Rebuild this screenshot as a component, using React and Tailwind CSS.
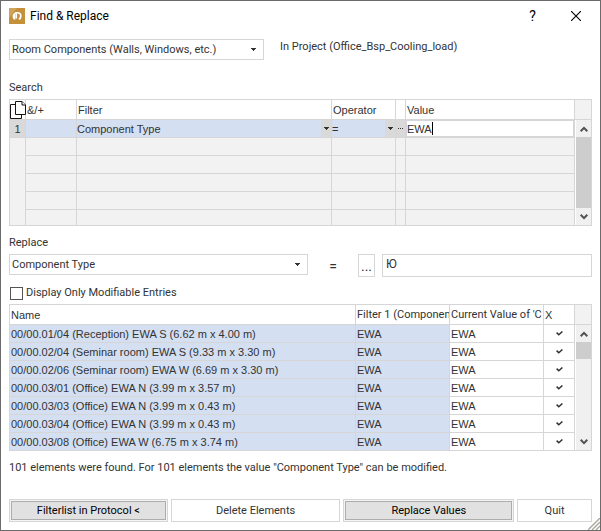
import React, { useState } from 'react';

const ELEMENTS = [
  { name: '00/00.01/04 (Reception) EWA S (6.62 m x 4.00 m)', filter: 'EWA', current: 'EWA' },
  { name: '00/00.02/04 (Seminar room) EWA S (9.33 m x 3.30 m)', filter: 'EWA', current: 'EWA' },
  { name: '00/00.02/06 (Seminar room) EWA W (6.69 m x 3.30 m)', filter: 'EWA', current: 'EWA' },
  { name: '00/00.03/01 (Office) EWA N (3.99 m x 3.57 m)', filter: 'EWA', current: 'EWA' },
  { name: '00/00.03/03 (Office) EWA N (3.99 m x 0.43 m)', filter: 'EWA', current: 'EWA' },
  { name: '00/00.03/04 (Office) EWA N (3.99 m x 0.43 m)', filter: 'EWA', current: 'EWA' },
  { name: '00/00.03/08 (Office) EWA W (6.75 m x 3.74 m)', filter: 'EWA', current: 'EWA' },
];

const EMPTY_ROWS = [2, 3, 4, 5];

function Caret() {
  return (
    <svg width="5" height="3" viewBox="0 0 5 3" shapeRendering="crispEdges" aria-hidden="true">
      <path d="M0 0h5v1H0zM1 1h3v1H1zM2 2h1v1H2z" fill="#333" />
    </svg>
  );
}

function Chevron({ down }) {
  return (
    <svg width="8" height="6" viewBox="0 0 8 6" fill="none" stroke="#505050" strokeWidth="2" aria-hidden="true">
      <path d={down ? 'M0.7 0.8L4 4.1L7.3 0.8' : 'M0.7 5.2L4 1.9L7.3 5.2'} />
    </svg>
  );
}

function ComboBox({ label, options, className }) {
  return (
    <div className={`relative h-[21px] ${className}`}>
      <select
        aria-label={label}
        className="h-full w-full appearance-none border border-[#d6d6d6] bg-white pl-[2px] pr-5 outline-none"
      >
        {options.map((o) => <option key={o}>{o}</option>)}
      </select>
      <span className="pointer-events-none absolute inset-y-0 right-2 flex items-center">
        <Caret />
      </span>
    </div>
  );
}

function CellSelect({ label, value }) {
  return (
    <div className="relative h-[17px]">
      <select aria-label={label} className="block h-full w-full appearance-none bg-transparent pr-3 outline-none">
        <option>{value}</option>
      </select>
      <span className="pointer-events-none absolute inset-y-0 right-0 flex w-[10px] items-center justify-center bg-[#d9d9d9]">
        <Caret />
      </span>
    </div>
  );
}

function ScrollBar({ thumbClass }) {
  return (
    <div className="flex w-[17px] flex-none flex-col border-y border-r border-[#d6d6d6] bg-[#f0f0f0]">
      <div className="h-[20px] flex-none border-b border-[#d6d6d6] bg-[#f2f2f2]" />
      <div className="flex flex-1 flex-col border-l border-white">
        <button type="button" aria-label="Scroll up" className="flex h-[17px] flex-none items-center justify-center">
          <Chevron />
        </button>
        <div className="flex-1">
          <div className={`bg-[#cdcdcd] ${thumbClass}`} />
        </div>
        <button type="button" aria-label="Scroll down" className="flex h-[17px] flex-none items-center justify-center">
          <Chevron down />
        </button>
      </div>
    </div>
  );
}

const th = 'h-[20px] overflow-hidden border border-[#d6d6d6] p-0 pl-px text-left font-normal whitespace-nowrap';
const td = 'h-[18px] overflow-hidden border border-[#d6d6d6] p-0 whitespace-nowrap';
const plainButton = 'border border-[#d6d6d6] bg-white text-[#333]';
const raisedButton = 'border border-[#d6d6d6] bg-[#f4f4f4] p-px text-black';
const raisedFace = 'flex h-full items-center justify-center border border-[#adadad] bg-[#e1e1e1]';

export default function App() {
  const [filterValue, setFilterValue] = useState('EWA');
  const [newValue, setNewValue] = useState('Ю');
  const [onlyModifiable, setOnlyModifiable] = useState(false);

  return (
    <div className="relative flex min-h-screen flex-col border border-[#6b6b6b] bg-white px-2 font-['Roboto',sans-serif] text-[11px] leading-4 text-[#333]">
      {/* Title bar */}
      <header className="flex h-[30px] items-center text-black">
        <svg width="16" height="16" viewBox="0 0 16 16" aria-hidden="true">
          <rect width="16" height="16" fill="#c4913a" />
          <path d="M0 0h8L0 10z" fill="#cfa55c" />
          <path d="M7.2 4.2C4.8 4.6 3.6 6.2 3.6 8.2C3.6 10.2 4.4 11.4 6.2 11.8V6.5z" fill="#fff" />
          <path d="M7.2 10.4V4.9C10.4 4.3 11.8 5.8 11.8 8C11.8 9.8 11.2 10.8 9.8 11.3" fill="none" stroke="#fff" strokeWidth="1.7" />
        </svg>
        <h1 className="ml-[5px] flex-1 text-[12px]">Find &amp; Replace</h1>
        <button type="button" aria-label="Help" className="w-[45px] pl-4 text-center text-[14px]">?</button>
        <button type="button" aria-label="Close" className="flex w-[45px] justify-center pl-3">
          <svg width="10" height="10" viewBox="0 0 10 10" stroke="#000" strokeWidth="1.1" aria-hidden="true">
            <path d="M0 0L10 10M10 0L0 10" />
          </svg>
        </button>
      </header>

      <div className="mt-2 flex">
        <ComboBox label="Object type" options={['Room Components (Walls, Windows, etc.)']} className="w-[255px]" />
        <p className="ml-4">In Project (Office_Bsp_Cooling_load)</p>
      </div>

      {/* Search */}
      <section className="mt-5">
        <h2>Search</h2>
        <div className="mt-[3px] flex font-['Liberation_Sans',sans-serif]">
          <div className="min-w-0 flex-1">
            <table className="w-full table-fixed border-collapse">
              <colgroup>
                <col className="w-[16px]" />
                <col className="w-[51px]" />
                <col />
                <col className="w-[64px]" />
                <col className="w-[10px]" />
                <col className="w-[169px]" />
              </colgroup>
              <thead>
                <tr>
                  <th className="h-[20px] border border-[#d6d6d6] p-0">
                    <svg width="16" height="18" viewBox="0 0 16 18" fill="#fff" stroke="#1a1010" className="overflow-visible" role="img" aria-label="Copy">
                      <path d="M0.5 3.5H11.5V17.5H0.5z" />
                      <path d="M5.5 0.5H12L15.5 4V13.5H5.5z" />
                      <path d="M12 0.5V4H15.5" />
                    </svg>
                  </th>
                  <th className={th}>&amp;/+</th>
                  <th className={th}>Filter</th>
                  <th className={th}>Operator</th>
                  <th className={th} aria-label="More" />
                  <th className={th}>Value</th>
                </tr>
              </thead>
              <tbody>
                <tr className="bg-[#d4dff2]">
                  <td className={`${td} bg-[#d9d9d9] text-center`}>1</td>
                  <td className={td} />
                  <td className={td}><CellSelect label="Filter" value="Component Type" /></td>
                  <td className={td}><CellSelect label="Operator" value="=" /></td>
                  <td className={`${td} bg-[#d9d9d9]`}>
                    <button type="button" aria-label="Choose value" className="flex w-full items-center justify-center gap-px">
                      <span className="h-px w-px bg-[#333]" />
                      <span className="h-px w-px bg-[#333]" />
                      <span className="h-px w-px bg-[#333]" />
                    </button>
                  </td>
                  <td className={`${td} bg-white`}>
                    <div className="relative h-[17px]">
                      <input
                        aria-label="Value"
                        value={filterValue}
                        onChange={(e) => setFilterValue(e.target.value)}
                        className="block h-full w-full border border-[#d6d6d6] bg-white outline-none"
                      />
                      <span className="absolute top-[2px] left-[26px] h-[13px] w-px bg-black" />
                    </div>
                  </td>
                </tr>
                {EMPTY_ROWS.map((n) => (
                  <tr key={n} className="bg-[#f2f2f2]">
                    <td className="h-[18px] border-l border-[#d6d6d6] p-0" />
                    <td className={td} />
                    <td className={td} />
                    <td className={td} />
                    <td className={td} />
                    <td className={td} />
                  </tr>
                ))}
                <tr className="bg-[#f2f2f2]">
                  <td className="h-[16px] border-b border-l border-[#d6d6d6] p-0" />
                  <td className="border border-[#d6d6d6] p-0" />
                  <td className="border border-[#d6d6d6] p-0" />
                  <td className="border border-[#d6d6d6] p-0" />
                  <td className="border border-[#d6d6d6] p-0" />
                  <td className="border border-[#d6d6d6] p-0" />
                </tr>
              </tbody>
            </table>
          </div>
          <ScrollBar thumbClass="h-full" />
        </div>
      </section>

      {/* Replace */}
      <section className="mt-[9px]">
        <h2>Replace</h2>
        <div className="mt-[3px] flex">
          <ComboBox label="Replace" options={['Component Type']} className="w-[299px]" />
          <span className="w-[50px] self-center text-center text-[14px]">=</span>
          <button type="button" className="h-[23px] w-[17px] border border-[#d6d6d6] bg-white text-[14px]">...</button>
          <input
            aria-label="New value"
            value={newValue}
            onChange={(e) => setNewValue(e.target.value)}
            className="ml-[7px] h-[23px] min-w-0 flex-1 border border-[#d6d6d6] bg-white px-[3px] pb-1 text-[12px] outline-none"
          />
        </div>
      </section>

      <label className="mt-2 flex items-center gap-[3px]">
        <input
          type="checkbox"
          checked={onlyModifiable}
          onChange={(e) => setOnlyModifiable(e.target.checked)}
          className="ml-px h-[13px] w-[13px] appearance-none border border-[#555] bg-white checked:bg-[#555]"
        />
        Display Only Modifiable Entries
      </label>

      {/* Found elements */}
      <div className="mt-[3px] flex font-['Liberation_Sans',sans-serif]">
        <div className="min-w-0 flex-1">
          <table className="w-full table-fixed border-collapse">
            <colgroup>
              <col />
              <col className="w-[94px]" />
              <col className="w-[94px]" />
              <col className="w-[31px]" />
            </colgroup>
            <thead>
              <tr>
                <th className={th}>Name</th>
                <th className={`${th} font-['Roboto',sans-serif]`}>Filter 1 (Component</th>
                <th className={`${th} font-['Roboto',sans-serif]`}>Current Value of 'C</th>
                <th className={th}>X</th>
              </tr>
            </thead>
            <tbody>
              {ELEMENTS.map((el) => (
                <tr key={el.name}>
                  <td className={`${td} bg-[#d4dff2] pl-px`}>{el.name}</td>
                  <td className={`${td} bg-[#d4dff2] pl-px`}>{el.filter}</td>
                  <td className={`${td} pl-px`}>{el.current}</td>
                  <td className={td}>
                    <svg width="7" height="5" viewBox="0 0 7 5" fill="none" stroke="#333" strokeWidth="1.5" className="mx-auto" role="img" aria-label="Modifiable">
                      <path d="M0.6 1.6L2.8 3.8L6.4 0.5" />
                    </svg>
                  </td>
                </tr>
              ))}
            </tbody>
          </table>
        </div>
        <ScrollBar thumbClass="h-[17px]" />
      </div>

      <p className="mt-[9px]">
        101 elements were found. For 101 elements the value "Component Type" can be modified.
      </p>

      <footer className="mt-[23px] grid h-[23px] grid-cols-[159fr_170fr_171fr_75fr] gap-[3px]">
        <button type="button" className={raisedButton}>
          <span className={raisedFace}>Filterlist in Protocol &lt;</span>
        </button>
        <button type="button" className={plainButton}>Delete Elements</button>
        <button type="button" className={raisedButton}>
          <span className={raisedFace}>Replace Values</span>
        </button>
        <button type="button" className={plainButton}>Quit</button>
      </footer>

      {/* Resize grip */}
      <svg width="12" height="12" viewBox="0 0 12 12" stroke="#a9a799" strokeWidth="1.4" className="absolute right-0 bottom-0" aria-hidden="true">
        <path d="M0 12L12 0M4 12L12 4M8 12L12 8" />
      </svg>
    </div>
  );
}
